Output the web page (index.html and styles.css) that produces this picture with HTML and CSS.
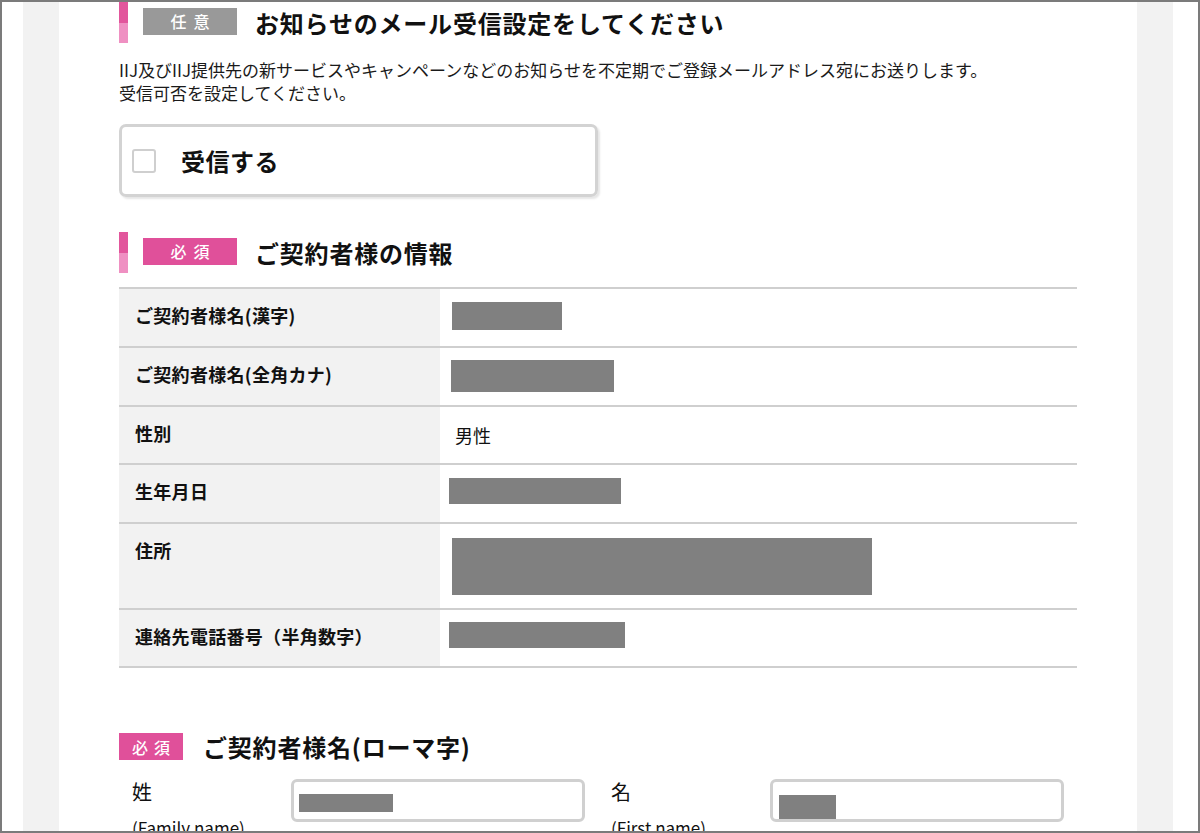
FILE: index.html
```html
<!DOCTYPE html>
<html lang="ja">
<head>
<meta charset="utf-8">
<title>お申し込み</title>
<link rel="stylesheet" href="styles.css">
</head>
<body>
<div class="frame">
  <div class="band">
    <div class="content">
      <div class="sec-head">
        <span class="bar"></span>
        <span class="badge badge-opt">任意</span>
        <h2 class="sec-title">お知らせのメール受信設定をしてください</h2>
      </div>
      <p class="lead">IIJ及びIIJ提供先の新サービスやキャンペーンなどのお知らせを不定期でご登録メールアドレス宛にお送りします。<br>受信可否を設定してください。</p>
      <label class="check-card">
        <span class="checkbox"></span>
        <span class="check-text">受信する</span>
      </label>

      <div class="sec-head sec-gap">
        <span class="bar"></span>
        <span class="badge badge-req">必須</span>
        <h2 class="sec-title">ご契約者様の情報</h2>
      </div>
      <table class="info">
        <tr>
          <th>ご契約者様名(漢字)</th>
          <td><div class="redact" style="width:110px;height:28px;margin:-1px 0 0 0"></div></td>
        </tr>
        <tr>
          <th>ご契約者様名(全角カナ)</th>
          <td><div class="redact" style="width:163px;height:32px;margin:-2px 0 -1px -1px"></div></td>
        </tr>
        <tr class="short">
          <th>性別</th>
          <td><span class="val">男性</span></td>
        </tr>
        <tr>
          <th>生年月日</th>
          <td><div class="redact" style="width:172px;height:26px;margin:-1px 0 0 -3px"></div></td>
        </tr>
        <tr class="short">
          <th class="top">住所</th>
          <td><div class="redact" style="width:420px;height:57px;margin:0"></div></td>
        </tr>
        <tr class="short">
          <th>連絡先電話番号（半角数字）</th>
          <td><div class="redact" style="width:176px;height:26px;margin:-2px 0 0 -3px"></div></td>
        </tr>
      </table>

      <div class="sec-head sec-head-small">
        <span class="badge badge-req badge-small">必須</span>
        <h2 class="sec-title title-small">ご契約者様名(ローマ字)</h2>
      </div>
      <div class="fields">
        <div class="field">
          <div class="field-label">
            <div class="field-name">姓</div>
            <div class="field-sub">(Family name)</div>
          </div>
          <div class="input"><div class="redact" style="width:94px;height:18px;margin:12px 0 0 5px"></div></div>
        </div>
        <div class="field">
          <div class="field-label">
            <div class="field-name">名</div>
            <div class="field-sub">(First name)</div>
          </div>
          <div class="input"><div class="redact" style="width:57px;height:24px;margin:13px 0 0 6px"></div></div>
        </div>
      </div>
    </div>
  </div>
</div>
</body>
</html>
```

FILE: styles.css
```css
* { box-sizing: border-box; }
html, body { margin: 0; padding: 0; background: #fff; }
body {
  font-family: "Noto Sans CJK JP", "Noto Sans", sans-serif;
  color: #111;
}
.frame {
  width: 1200px;
  height: 833px;
  border: 2px solid #7b7b7b;
  padding: 0 25px 0 21px;
  overflow: hidden;
}
.band {
  background: #f2f2f2;
  padding: 0 36px;
  height: 100%;
}
.content {
  background: #fff;
  height: 100%;
  padding: 0 60px;
}
.sec-head {
  display: flex;
  align-items: center;
  height: 41px;
}
.sec-gap { margin-top: 35px; }
.bar {
  width: 9px;
  align-self: stretch;
  background: linear-gradient(#e2569c 0, #e2569c 51%, #ef90c2 51%, #ef90c2 100%);
  margin-right: 15px;
}
.badge {
  width: 94px;
  height: 27px;
  display: flex;
  align-items: center;
  justify-content: center;
  color: #fff;
  font-size: 16px;
  font-weight: 500;
  letter-spacing: 7px;
  padding-left: 7px;
  margin-top: -3px;
  line-height: 1;
}
.badge-opt { background: #999; }
.badge-req { background: #e0509a; }
.sec-title {
  margin: 0 0 0 18px;
  font-size: 24px;
  font-weight: bold;
  line-height: 1;
  letter-spacing: 0.8px;
}
.lead {
  margin: 15px 0 0;
  font-size: 17px;
  line-height: 23px;
  color: #1a1a1a;
}
.check-card {
  display: flex;
  align-items: center;
  width: 479px;
  height: 73px;
  margin-top: 20px;
  border: 3px solid #d3d3d3;
  border-radius: 7px;
  padding: 0 10px;
  box-shadow: 2px 2px 2px rgba(0,0,0,0.10);
}
.checkbox {
  width: 24px;
  height: 24px;
  border: 2px solid #cfcfcf;
  border-radius: 3px;
  background: #fff;
  margin-top: 1px;
}
.check-text {
  margin-left: 25px;
  font-size: 24px;
  font-weight: bold;
  letter-spacing: 0.5px;
}
.info {
  width: 958px;
  margin-top: 14px;
  border-collapse: collapse;
}
.info tr { border-top: 2px solid #cfcfcf; border-bottom: 2px solid #cfcfcf; }
.info th {
  width: 321px;
  background: #f2f2f2;
  text-align: left;
  font-size: 18px;
  font-weight: bold;
  line-height: 29px;
  padding: 12px 0 16px 16px;
  vertical-align: top;
  letter-spacing: 0.3px;
}
.info td {
  padding: 14px 0 14px 12px;
  line-height: 29px;
  font-size: 18px;
  vertical-align: top;
}
.info tr.short th { padding-bottom: 15px; }
.info tr.short td { padding-bottom: 13px; }
.val { display: inline-block; padding-left: 3px; margin-top: -3px; }
.redact { background: #808080; }
.sec-head-small { margin-top: 65px; height: 27px; }
.badge-small {
  width: 64px;
  letter-spacing: 6px;
  padding-left: 6px;
  margin-top: 0;
}
.title-small { margin-left: 20px; }
.fields {
  display: flex;
  gap: 13px;
  margin-top: 19px;
}
.field { display: flex; }
.field-label {
  width: 172px;
  padding-left: 13px;
}
.field-name {
  font-size: 20px;
  line-height: 26px;
}
.field-sub {
  margin-top: 11px;
  font-size: 17px;
  line-height: 24px;
}
.input {
  width: 294px;
  height: 43px;
  border: 3px solid #d0d0d0;
  border-radius: 6px;
  background: #fff;
}
.input .redact { display: block; }
```
